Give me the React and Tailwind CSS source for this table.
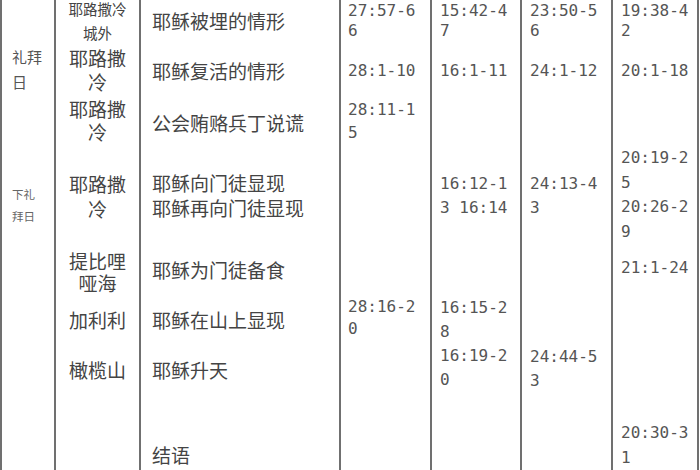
import React from "react";

// Easter readings table: columns are separated by vertical rules only
const cjk = "font-['Noto_Sans_CJK_SC',sans-serif]";
const mono = "font-['DejaVu_Sans_Mono',monospace] text-[16px] text-[#555] whitespace-nowrap";

function Lines({ items, className }) {
  return (
    <div className={className}>
      {items.map((t, i) => (
        <div key={i}>{t}</div>
      ))}
    </div>
  );
}

export default function App() {
  return (
    <div className="w-[700px] h-[470px] bg-white overflow-hidden flex">
      {/* Day */}
      <div className={`w-[54px] shrink-0 h-full border-l-2 border-[#707070] pl-[10px] text-[#555] ${cjk}`}>
        <Lines items={["礼拜", "日"]} className="mt-[44px] text-[15px] leading-[25px]" />
        <Lines items={["下礼", "拜日"]} className="mt-[89px] text-[11.5px] leading-[22px] text-[#666]" />
      </div>

      {/* Place */}
      <div className={`w-[85px] shrink-0 h-full border-l-2 border-[#707070] text-center text-[#444] whitespace-nowrap ${cjk}`}>
        <Lines items={["耶路撒冷", "城外"]} className="-mt-[3px] text-[14.5px] leading-[24px]" />
        <Lines items={["耶路撒", "冷"]} className="mt-[1px] text-[19px] leading-[24px]" />
        <Lines items={["耶路撒", "冷"]} className="mt-[3px] text-[19px] leading-[23px]" />
        <Lines items={["耶路撒", "冷"]} className="mt-[28px] text-[19px] leading-[25px]" />
        <Lines items={["提比哩", "哑海"]} className="mt-[29px] text-[19px] leading-[22px]" />
        <Lines items={["加利利"]} className="mt-[14px] text-[19px] leading-[24px]" />
        <Lines items={["橄榄山"]} className="mt-[26px] text-[19px] leading-[24px]" />
      </div>

      {/* Event */}
      <div className={`w-[200px] shrink-0 h-full border-l-2 border-[#707070] pl-[11px] text-[19px] leading-[25px] text-[#444] whitespace-nowrap ${cjk}`}>
        <Lines items={["耶稣被埋的情形"]} className="mt-[8px]" />
        <Lines items={["耶稣复活的情形"]} className="mt-[25px]" />
        <Lines items={["公会贿赂兵丁说谎"]} className="mt-[27px]" />
        <Lines items={["耶稣向门徒显现", "耶稣再向门徒显现"]} className="mt-[35px]" />
        <Lines items={["耶稣为门徒备食"]} className="mt-[37px]" />
        <Lines items={["耶稣在山上显现"]} className="mt-[25px]" />
        <Lines items={["耶稣升天"]} className="mt-[25px]" />
        <Lines items={["结语"]} className="mt-[60px]" />
      </div>

      {/* Matthew */}
      <div className={`w-[91px] shrink-0 h-full border-l-2 border-[#707070] pl-[7px] ${mono}`}>
        <Lines items={["27:57-6", "6"]} className="mt-[1px] leading-[20px]" />
        <Lines items={["28:1-10"]} className="mt-[18px] leading-[24px]" />
        <Lines items={["28:11-1", "5"]} className="mt-[15px] leading-[23px]" />
        <Lines items={["28:16-2", "0"]} className="mt-[152px] leading-[22px]" />
      </div>

      {/* Mark */}
      <div className={`w-[90px] shrink-0 h-full border-l-2 border-[#707070] pl-[8px] ${mono}`}>
        <Lines items={["15:42-4", "7"]} className="mt-[1px] leading-[20px]" />
        <Lines items={["16:1-11"]} className="mt-[18px] leading-[24px]" />
        <Lines items={["16:12-1", "3 16:14"]} className="mt-[89px] leading-[24px]" />
        <Lines items={["16:15-2", "8", "16:19-2", "0"]} className="mt-[76px] leading-[24px]" />
      </div>

      {/* Luke */}
      <div className={`w-[91px] shrink-0 h-full border-l-2 border-[#707070] pl-[8px] ${mono}`}>
        <Lines items={["23:50-5", "6"]} className="mt-[1px] leading-[20px]" />
        <Lines items={["24:1-12"]} className="mt-[18px] leading-[24px]" />
        <Lines items={["24:13-4", "3"]} className="mt-[89px] leading-[24px]" />
        <Lines items={["24:44-5", "3"]} className="mt-[125px] leading-[24px]" />
      </div>

      {/* John */}
      <div className={`w-[88px] shrink-0 h-full border-l-2 border-r-2 border-[#707070] pl-[8px] ${mono}`}>
        <Lines items={["19:38-4", "2"]} className="mt-[1px] leading-[20px]" />
        <Lines items={["20:1-18"]} className="mt-[18px] leading-[24px]" />
        <Lines items={["20:19-2", "5", "20:26-2", "9"]} className="mt-[63px] leading-[24.5px]" />
        <Lines items={["21:1-24"]} className="mt-[12px] leading-[24px]" />
        <Lines items={["20:30-3", "1"]} className="mt-[140px] leading-[25px]" />
      </div>
    </div>
  );
}
